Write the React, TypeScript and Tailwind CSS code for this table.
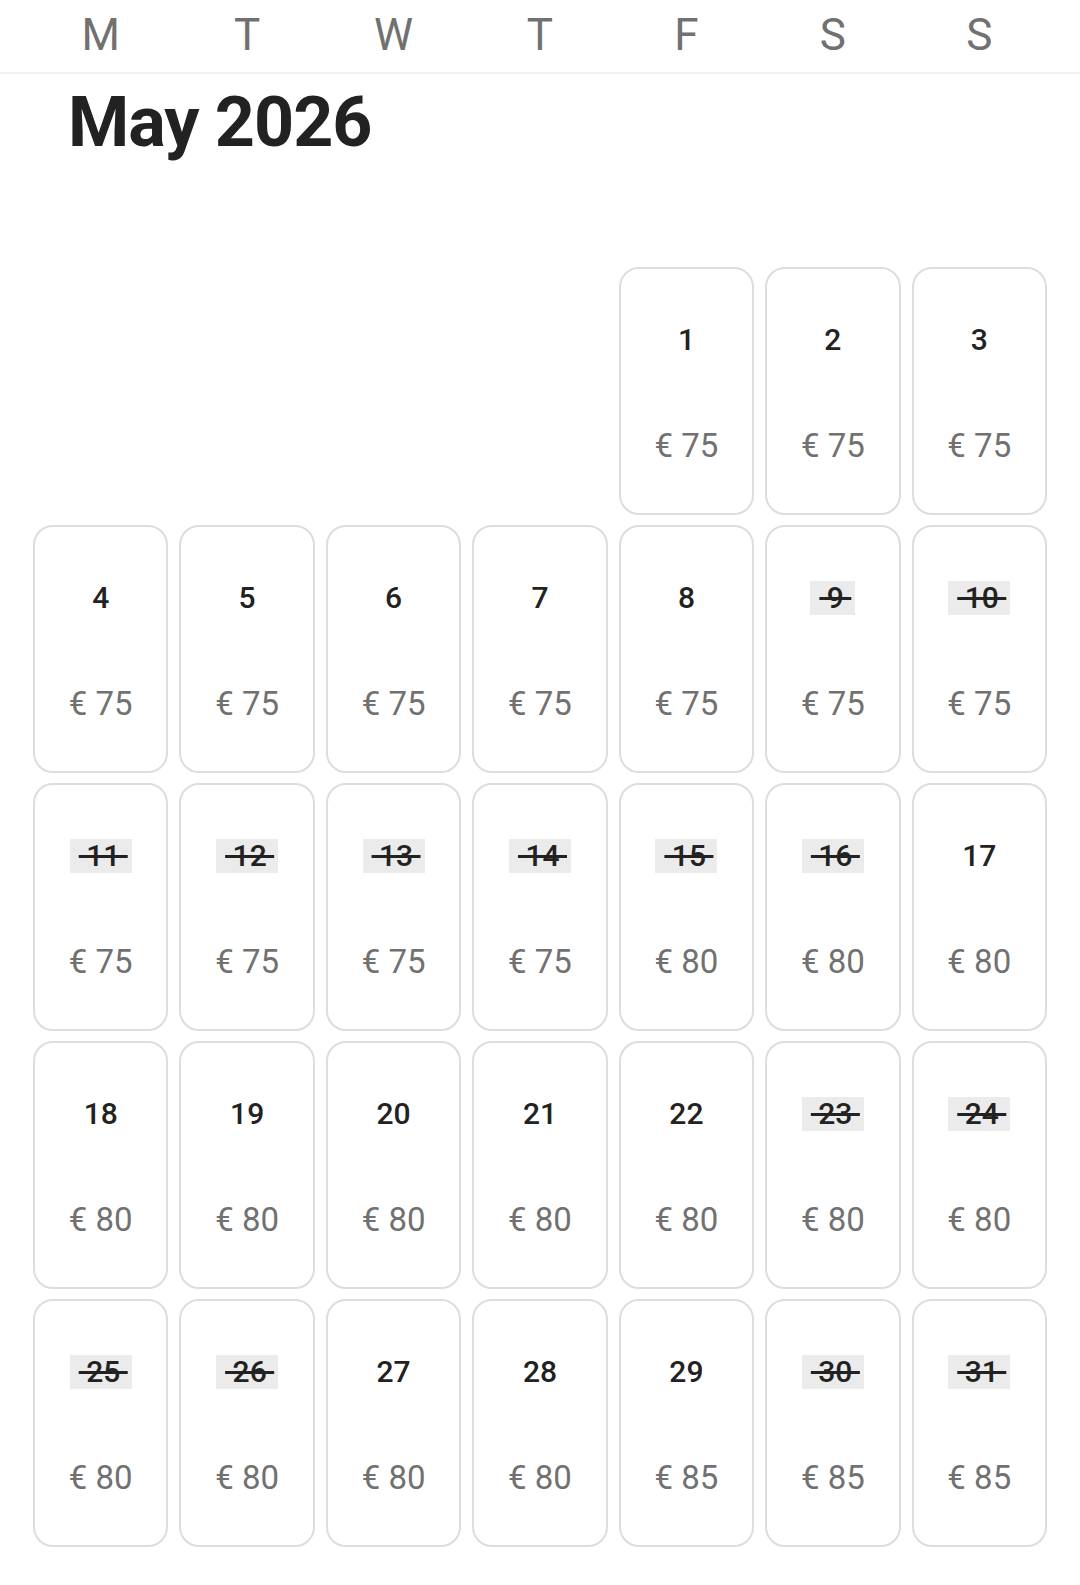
import React from "react";

type Day = { d: number; price: number; blocked: boolean };

const blockedSet = new Set([9, 10, 11, 12, 13, 14, 15, 16, 23, 24, 25, 26, 30, 31]);

function priceFor(d: number) {
  if (d <= 14) return 75;
  if (d <= 28) return 80;
  return 85;
}

const days: Day[] = Array.from({ length: 31 }, (_, i) => ({
  d: i + 1,
  price: priceFor(i + 1),
  blocked: blockedSet.has(i + 1),
}));

const font = { fontFamily: 'Roboto, "Noto Sans", sans-serif' };

function Cell({ day }: { day: Day }) {
  return (
    <div className="h-[248px] rounded-[20px] border-2 border-[#dddddd] bg-white flex flex-col items-center">
      <div className="mt-[53px] h-[36px] flex items-center justify-center">
        {day.blocked ? (
          <span className="bg-[#ebebeb] pl-[9px] pr-[4px] h-[34px] flex items-center text-[30px] font-medium text-[#222222] line-through decoration-[3px] leading-none">
            {"\u00a0" + day.d + "\u00a0"}
          </span>
        ) : (
          <span className="text-[30px] font-medium text-[#222222] leading-none">{day.d}</span>
        )}
      </div>
      <div className="mt-[68px] h-[38px] flex items-center text-[33px] text-[#717171] leading-none">
        € {day.price}
      </div>
    </div>
  );
}

export default function App() {
  const letters = ["M", "T", "W", "T", "F", "S", "S"];
  return (
    <div className="w-[1080px] min-h-[1585px] bg-white" style={font}>
      <div className="border-b-2 border-[#f0f0f0] h-[74px] px-[33px] grid grid-cols-7 gap-x-[11px] items-center">
        {letters.map((l, i) => (
          <div key={i} className="text-center text-[44px] text-[#717171] leading-none pb-[2px]">
            {l}
          </div>
        ))}
      </div>
      <div className="pl-[68px] pt-[2px] text-[70px] font-bold text-[#222222] leading-[92px] tracking-[-1px]">
        May 2026
      </div>
      <div className="px-[33px] pt-[99px] grid grid-cols-7 gap-x-[11px] gap-y-[10px]">
        <div />
        <div />
        <div />
        <div />
        {days.map((d) => (
          <Cell key={d.d} day={d} />
        ))}
      </div>
    </div>
  );
}
